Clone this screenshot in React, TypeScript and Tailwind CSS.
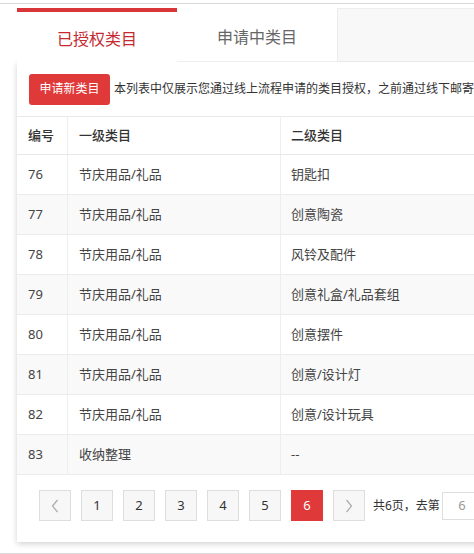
import React from 'react';

const rows = [
  { id: 76, first: '节庆用品/礼品', second: '钥匙扣' },
  { id: 77, first: '节庆用品/礼品', second: '创意陶瓷' },
  { id: 78, first: '节庆用品/礼品', second: '风铃及配件' },
  { id: 79, first: '节庆用品/礼品', second: '创意礼盒/礼品套组' },
  { id: 80, first: '节庆用品/礼品', second: '创意摆件' },
  { id: 81, first: '节庆用品/礼品', second: '创意/设计灯' },
  { id: 82, first: '节庆用品/礼品', second: '创意/设计玩具' },
  { id: 83, first: '收纳整理', second: '--' },
];

const pages = [1, 2, 3, 4, 5, 6];

const PageBtn: React.FC<{ active?: boolean; children: React.ReactNode }> = ({ active, children }) => (
  <div
    className={`w-[32px] h-[31px] flex items-center justify-center text-[13px] border ${
      active ? 'bg-[#e0393a] border-[#e0393a] text-white' : 'bg-[#f7f7f7] border-[#dedede] text-[#333]'
    }`}
  >
    {children}
  </div>
);

const Chevron: React.FC<{ dir: 'left' | 'right' }> = ({ dir }) => (
  <svg width="8" height="14" viewBox="0 0 8 14" fill="none" stroke="#aaa" strokeWidth="1.2">
    {dir === 'left' ? <path d="M6.5 1 L1.5 7 L6.5 13" /> : <path d="M1.5 1 L6.5 7 L1.5 13" />}
  </svg>
);

const App: React.FC = () => {
  return (
    <div
      className="w-[474px] h-[554px] overflow-hidden bg-white"
      style={{ fontFamily: '"Noto Sans", "Noto Sans CJK SC", sans-serif' }}
    >
      <div className="mt-[3px] h-[551px] border-y border-[#d9d9d9] pl-[17px] pt-[4px] overflow-hidden">
        {/* Tabs */}
        <div className="flex h-[54px] w-[640px]">
          <div className="w-[160px] bg-white border-t-4 border-[#d9363a] pt-[3px] flex items-center justify-center text-[16px] text-[#c42a2f]">
            已授权类目
          </div>
          <div className="w-[161px] bg-white border-r border-[#ececec] border-b border-b-[#eeeeee] pt-[4px] flex items-center justify-center text-[16px] text-[#666]">
            申请中类目
          </div>
          <div className="flex-1 bg-[#f8f8f8] border-t border-[#eeeeee] border-b border-b-[#e8e8e8]" />
        </div>

        {/* Card */}
        <div className="w-[640px] h-[480px] bg-white shadow-[0_2px_6px_rgba(0,0,0,0.18)]">
          <div className="h-[54px] flex items-center pl-[12px] gap-[4px] whitespace-nowrap">
            <button className="h-[31px] w-[81px] rounded-[3px] bg-[#e0393a] text-white text-[12px] shrink-0">
              申请新类目
            </button>
            <span className="text-[12px] text-[#333]">
              本列表中仅展示您通过线上流程申请的类目授权，之前通过线下邮寄的资料申请的类目暂不展示
            </span>
          </div>

          <div className="text-[13px] text-[#444] border-t border-[#e8e8e8]">
            <div className="grid grid-cols-[50px_213px_1fr] h-[38px] border-b border-[#e8e8e8] text-[#333] font-medium">
              <div className="pl-[11px] flex items-center">编号</div>
              <div className="pl-[11px] flex items-center border-l border-[#eeeeee]">一级类目</div>
              <div className="pl-[10px] flex items-center border-l border-[#eeeeee]">二级类目</div>
            </div>
            {rows.map((r, i) => (
              <div
                key={r.id}
                className={`grid grid-cols-[50px_213px_1fr] h-[40px] border-b border-[#ececec] ${
                  i % 2 === 1 ? 'bg-[#f9f9f9]' : 'bg-white'
                }`}
              >
                <div className="pl-[11px] flex items-center">{r.id}</div>
                <div className="pl-[11px] flex items-center border-l border-[#eeeeee]">{r.first}</div>
                <div className="pl-[10px] flex items-center border-l border-[#eeeeee]">{r.second}</div>
              </div>
            ))}
          </div>

          {/* Pagination */}
          <div className="flex items-center gap-[10px] pl-[22px] pt-[15px]">
            <PageBtn>
              <Chevron dir="left" />
            </PageBtn>
            {pages.map((p) => (
              <PageBtn key={p} active={p === 6}>
                {p}
              </PageBtn>
            ))}
            <PageBtn>
              <Chevron dir="right" />
            </PageBtn>
            <div className="flex items-center gap-[2px] -ml-[2px] whitespace-nowrap">
              <span className="text-[12px] text-[#333]">共6页，去第</span>
              <div className="w-[40px] h-[28px] border border-[#dedede] bg-white flex items-center justify-center text-[13px] text-[#999]">
                6
              </div>
              <span className="text-[12px] text-[#333] ml-[4px]">页</span>
            </div>
          </div>
        </div>
      </div>
    </div>
  );
};

export default App;
